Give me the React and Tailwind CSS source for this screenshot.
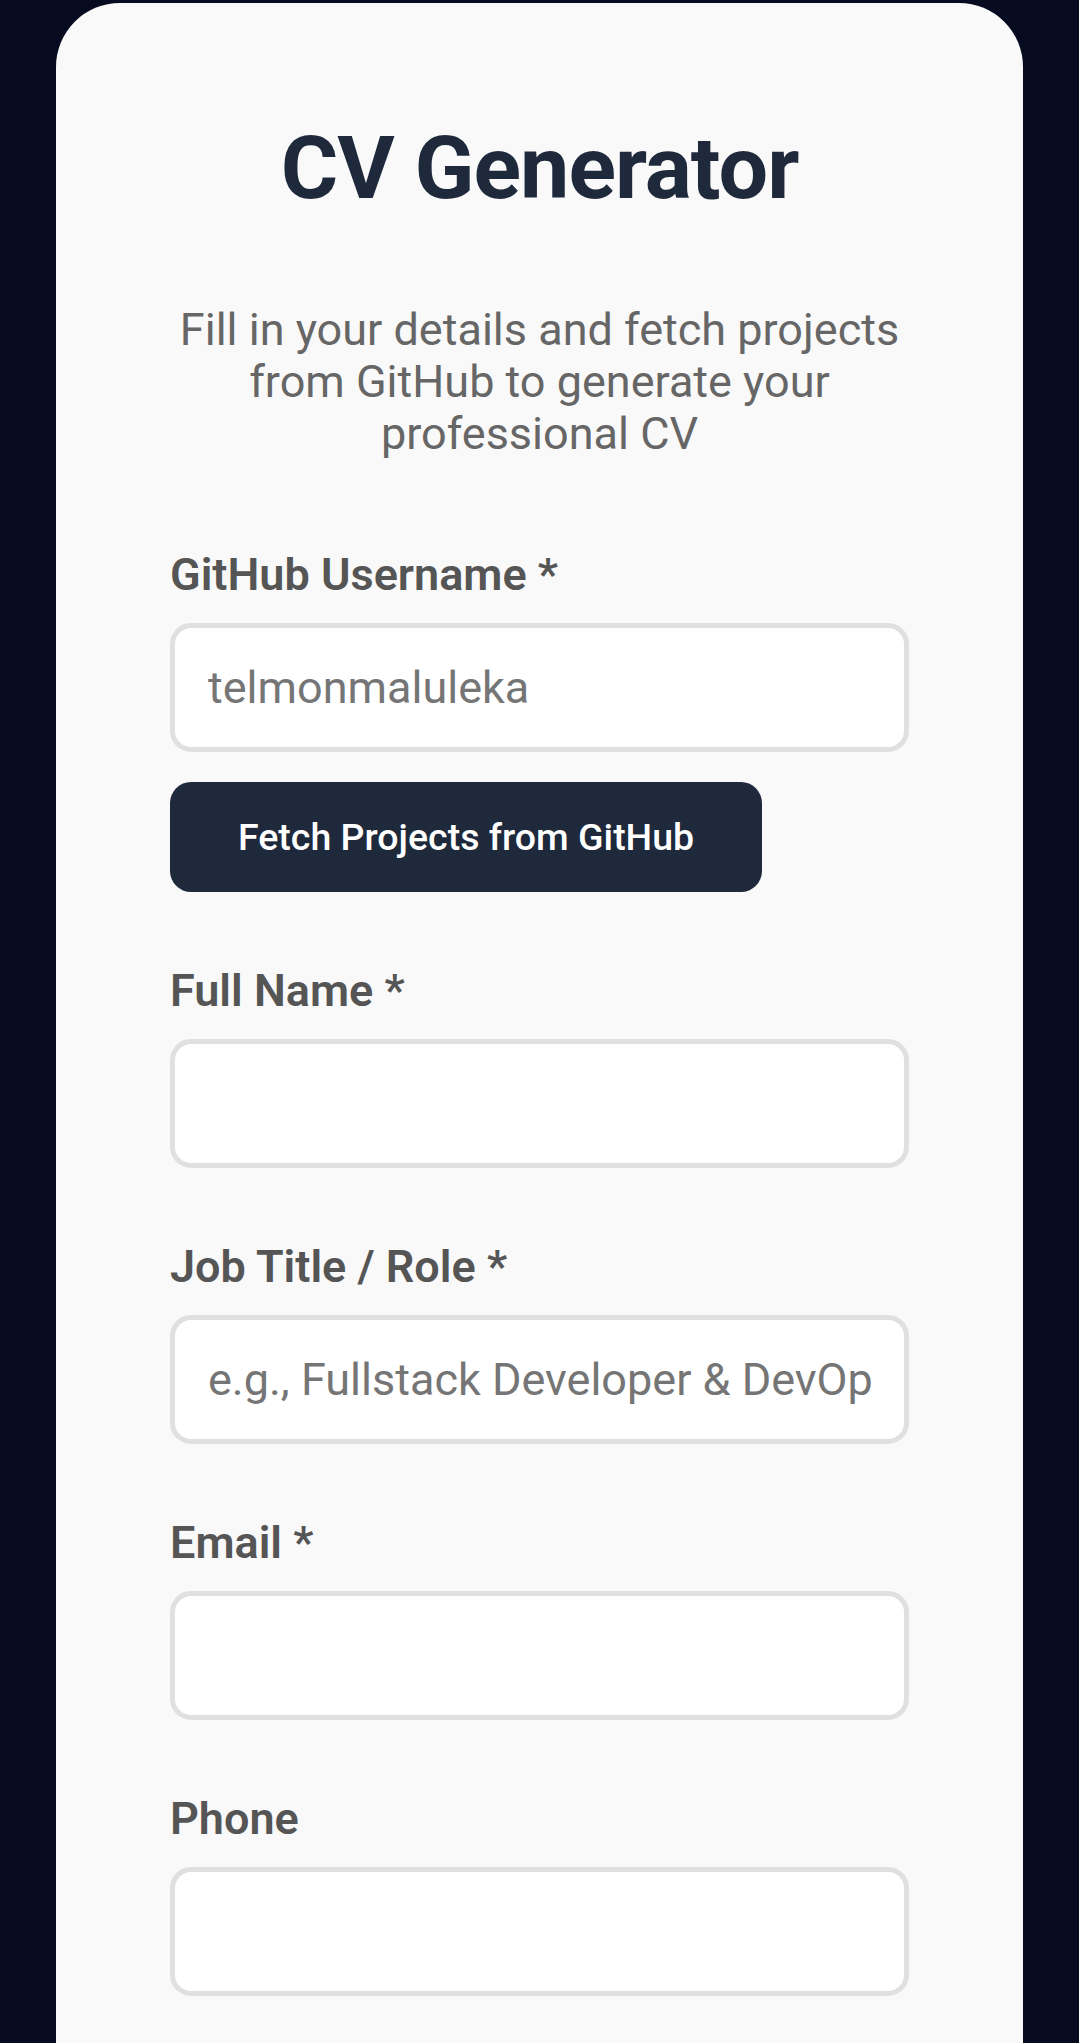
import React from 'react';

const fields = [
  { label: 'Full Name *', placeholder: '' },
  { label: 'Job Title / Role *', placeholder: 'e.g., Fullstack Developer & DevOps Engineer' },
  { label: 'Email *', placeholder: '' },
  { label: 'Phone', placeholder: '' },
];

const Field = ({ label, placeholder, children }) => (
  <div className="flex flex-col">
    <label className="text-[45px] leading-[52px] font-semibold text-[#555555] mb-[22px]">{label}</label>
    <input
      type="text"
      placeholder={placeholder}
      className="h-[129px] w-full rounded-[21px] border-[5px] border-[#e0e0e0] bg-white px-[33px] text-[45px] text-[#333] placeholder:text-[#757575] outline-none"
    />
    {children}
  </div>
);

const App = () => {
  return (
    <div className="h-[2043px] overflow-hidden bg-[#070b1f] pt-[3px] font-['Roboto',sans-serif]">
      <div className="mx-[56px] min-h-[2100px] rounded-t-[64px] bg-[#f9f9f9] px-[114px] pt-[113px]">
        <h1 className="text-center text-[88px] leading-[104px] font-bold tracking-[-1px] text-[#1e293b]">CV Generator</h1>
        <p className="mt-[84px] text-center text-[45px] leading-[52px] text-[#666666]">
          Fill in your details and fetch projects from GitHub to generate your professional CV
        </p>

        <div className="mt-[89px] flex flex-col gap-[73px]">
          <Field label="GitHub Username *" placeholder="telmonmaluleka">
            <button className="mt-[30px] h-[110px] w-fit rounded-[21px] bg-[#1e293b] px-[68px] text-[37.5px] font-medium text-white">
              Fetch Projects from GitHub
            </button>
          </Field>
          {fields.map((f) => (
            <Field key={f.label} label={f.label} placeholder={f.placeholder} />
          ))}
        </div>
      </div>
    </div>
  );
};

export default App;
